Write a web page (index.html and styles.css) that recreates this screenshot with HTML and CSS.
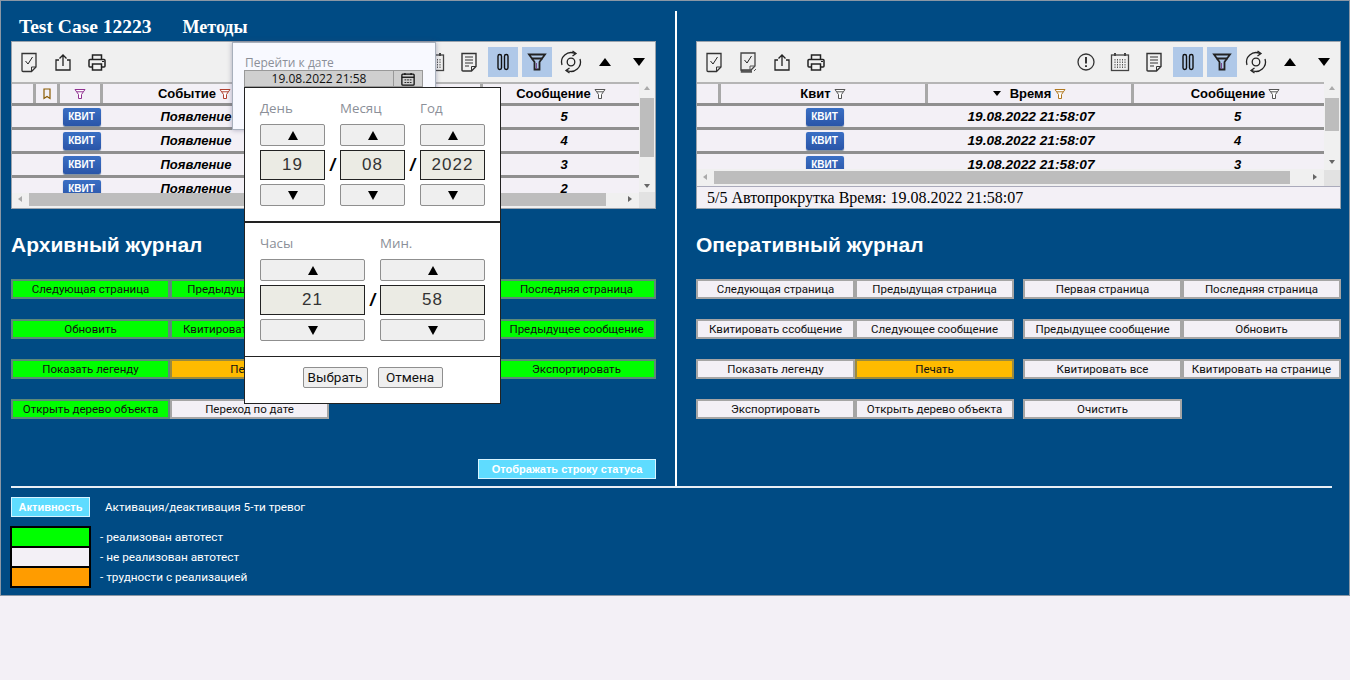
FILE: index.html
```html
<!DOCTYPE html>
<html lang="ru">
<head>
<meta charset="utf-8">
<title>Test Case 12223</title>
<link rel="stylesheet" href="styles.css">
</head>
<body>
<svg class="defs" width="0" height="0">
  <symbol id="i-doc" viewBox="0 0 20 22"><path d="M3 2.500h14v13.500l-4.500 4.500H4q-1 0-1-1z" fill="none" stroke="#333" stroke-width="1.300"/><path d="M12.500 20.500V16H17" fill="none" stroke="#333"/><path d="M6.500 10l2.500 3 4.500-7" fill="none" stroke="#222" stroke-width="1"/></symbol>
  <symbol id="i-docs" viewBox="0 0 20 22"><path d="M4 4.500v16h10" fill="none" stroke="#555" stroke-width="2.500"/><path d="M3 2h14v13l-4 4h-10z" fill="#eee" stroke="#444" stroke-width="1.300"/><path d="M6.500 9l2.500 3 4.500-7" fill="none" stroke="#222"/><path d="M12 19v-4h5M16 20l2-2" fill="none" stroke="#555"/></symbol>
  <symbol id="i-up" viewBox="0 0 20 22"><path d="M6 9H3v10h14V9h-3" fill="none" stroke="#222" stroke-width="1.300"/><path d="M10 15V4.500M6.500 7.500L10 4l3.500 3.500" fill="none" stroke="#222" stroke-width="1.300"/></symbol>
  <symbol id="i-print" viewBox="0 0 20 22"><path d="M5.500 8.500V4h9v4.500M5.500 16H3q-1 0-1-1V9.500q0-1 1-1h14q1 0 1 1V15q0 1-1 1h-2.500" fill="none" stroke="#222" stroke-width="1.500"/><rect x="5.500" y="13" width="9" height="6" fill="none" stroke="#222" stroke-width="1.500"/><path d="M15 10.500h2" stroke="#222"/></symbol>
  <symbol id="i-note" viewBox="0 0 20 22"><path d="M3 2.500h14v13l-4.500 4.500H4q-1 0-1-1z" fill="none" stroke="#333" stroke-width="1.400"/><path d="M6 6h8M6 9h8M6 12h8M6 15h4" stroke="#333"/><path d="M12.500 20v-4.500H17" fill="none" stroke="#333"/></symbol>
  <symbol id="i-cal" viewBox="0 0 20 20"><rect x="1.500" y="3" width="17" height="15.500" fill="none" stroke="#444" stroke-width="1.300"/><path d="M5 1v3M15 1v3" stroke="#444" stroke-width="2"/><path d="M5 7v9M7.500 7v9M10 7v9M12.500 7v9M15 7v9" stroke="#555" stroke-dasharray="1.500 1"/></symbol>
  <symbol id="i-cal2" viewBox="0 0 16 16"><rect x="1" y="2.500" width="14" height="12.500" rx="1" fill="none" stroke="#111" stroke-width="1.500"/><path d="M1 6h14" stroke="#111" stroke-width="1.500"/><path d="M4.500 1v2.500M11.500 1v2.500" stroke="#111" stroke-width="1.500"/><path d="M4 9h2M7 9h2M10 9h2M4 12h2M7 12h2M10 12h2" stroke="#111"/></symbol>
  <symbol id="i-pause" viewBox="0 0 20 20"><rect x="5" y="2.500" width="3.500" height="15" rx="1.700" fill="none" stroke="#111" stroke-width="1.400"/><rect x="11.500" y="2.500" width="3.500" height="15" rx="1.700" fill="none" stroke="#111" stroke-width="1.400"/></symbol>
  <symbol id="i-funnel" viewBox="0 0 20 20"><path d="M2 2.500h16l-5.500 7.500v7.500h-5V10z" fill="none" stroke="#222" stroke-width="1.800"/><path d="M4.500 6.500h11" stroke="#222" stroke-width="2"/><path d="M9.500 11v6" stroke="#7a4a90" stroke-width="1"/></symbol>
  <symbol id="i-sync" viewBox="0 0 24 24"><circle cx="12" cy="12" r="3.800" fill="none" stroke="#222" stroke-width="1.300"/><path d="M3 15A9.500 9.500 0 0 1 16 3.500M21 9a9.500 9.500 0 0 1-13 11.500" fill="none" stroke="#222" stroke-width="1.300"/><path d="M13.500 1l3.500 2.500-3.500 2.500M10.500 23L7 20.500 10.500 18" fill="none" stroke="#222" stroke-width="1.300"/></symbol>
  <symbol id="i-alert" viewBox="0 0 20 20"><circle cx="10" cy="10" r="8" fill="none" stroke="#333" stroke-width="1.300"/><path d="M10 5v6.500" stroke="#222" stroke-width="1.800"/><path d="M10 13.300v1.800" stroke="#222" stroke-width="1.800"/></symbol>
  <symbol id="i-f" viewBox="0 0 12 12"><path d="M1 1.500h10L7.500 6.500v4h-3v-4z" fill="#fff" stroke="currentColor" stroke-width="1"/><path d="M3 3.800h6" stroke="currentColor"/></symbol>
  <symbol id="i-mark" viewBox="0 0 10 12"><path d="M2 1h6v9.500L5 8.500l-3 2z" fill="none" stroke="#8a5a00" stroke-width="1.200"/></symbol>
</svg>

<main class="page">
  <div class="columns">
    <section class="col col-left">
      <header class="title"><span>Test Case 12223</span><span class="title-sub">Методы</span></header>
      <div class="panel panel-left">
        <div class="toolbar">
          <div class="tools">
            <span class="tool"><svg class="ic"><use href="#i-doc"/></svg></span>
            <span class="tool"><svg class="ic"><use href="#i-up"/></svg></span>
            <span class="tool"><svg class="ic"><use href="#i-print"/></svg></span>
          </div>
          <div class="tools">
            <span class="tool"><svg class="ic ic-cal"><use href="#i-cal"/></svg></span>
            <span class="tool"><svg class="ic"><use href="#i-note"/></svg></span>
            <span class="tool active"><svg class="ic ic-cal"><use href="#i-pause"/></svg></span>
            <span class="tool active"><svg class="ic ic-cal"><use href="#i-funnel"/></svg></span>
            <span class="tool"><svg class="ic ic-sync"><use href="#i-sync"/></svg></span>
            <span class="tool"><i class="tri up"></i></span>
            <span class="tool"><i class="tri down"></i></span>
          </div>
        </div>
        <div class="grid-wrap">
          <div class="viewport">
            <div class="row head cols-left">
              <div></div><div><svg class="mark"><use href="#i-mark"/></svg></div>
              <div><svg class="f f-pink"><use href="#i-f"/></svg></div>
              <div>Событие <svg class="f f-red"><use href="#i-f"/></svg></div>
              <div>Время</div>
              <div>Сообщение <svg class="f"><use href="#i-f"/></svg></div>
            </div>
            <div class="row cols-left"><div></div><div></div><div><span class="kvit">КВИТ</span></div><div>Появление</div><div class="time">19.08.2022 21:58:07</div><div class="msg">5</div></div>
            <div class="row cols-left"><div></div><div></div><div><span class="kvit">КВИТ</span></div><div>Появление</div><div class="time">19.08.2022 21:58:07</div><div class="msg">4</div></div>
            <div class="row cols-left"><div></div><div></div><div><span class="kvit">КВИТ</span></div><div>Появление</div><div class="time">19.08.2022 21:58:07</div><div class="msg">3</div></div>
            <div class="row cols-left"><div></div><div></div><div><span class="kvit">КВИТ</span></div><div>Появление</div><div class="time">19.08.2022 21:58:07</div><div class="msg">2</div></div>
          </div>
          <div class="vscroll vs-left"><i class="arr a-up"></i><b class="thumb"></b><i class="arr a-down"></i></div>
          <div class="hscroll"><i class="arr a-left"></i><b class="thumb"></b><i class="arr a-right"></i></div>
          <div class="corner"></div>
        </div>

        <div class="date-panel">
          <div class="date-label">Перейти к дате</div>
          <div class="date-field"><span>19.08.2022 21:58</span><span class="date-btn"><svg class="cal-small"><use href="#i-cal2"/></svg></span></div>
        </div>
      </div>

      <h2 class="journal">Архивный журнал</h2>
      <div class="btns">
        <span class="btn g">Следующая страница</span><span class="btn g">Предыдущая страница</span><span class="gap"></span><span class="btn g">Первая страница</span><span class="btn g">Последняя страница</span>
        <span class="btn g">Обновить</span><span class="btn g">Квитировать ссобщение</span><span class="gap"></span><span class="btn g">Следующее сообщение</span><span class="btn g">Предыдущее сообщение</span>
        <span class="btn g">Показать легенду</span><span class="btn o">Печать</span><span class="gap"></span><span class="btn g">Квитировать все</span><span class="btn g">Экспортировать</span>
        <span class="btn g">Открыть дерево объекта</span><span class="btn">Переход по дате</span>
      </div>
      <div class="status-row"><span class="status-btn">Отображать строку статуса</span></div>

      <div class="picker">
        <div class="pick-sec pick-date">
          <div class="pick-col"><label>День</label><span class="step"><i class="tri up"></i></span><span class="val">19</span><span class="step"><i class="tri down"></i></span></div>
          <span class="slash">/</span>
          <div class="pick-col"><label>Месяц</label><span class="step"><i class="tri up"></i></span><span class="val">08</span><span class="step"><i class="tri down"></i></span></div>
          <span class="slash">/</span>
          <div class="pick-col"><label>Год</label><span class="step"><i class="tri up"></i></span><span class="val">2022</span><span class="step"><i class="tri down"></i></span></div>
        </div>
        <div class="pick-sec pick-time">
          <div class="pick-col"><label>Часы</label><span class="step"><i class="tri up"></i></span><span class="val">21</span><span class="step"><i class="tri down"></i></span></div>
          <span class="slash">/</span>
          <div class="pick-col"><label>Мин.</label><span class="step"><i class="tri up"></i></span><span class="val">58</span><span class="step"><i class="tri down"></i></span></div>
        </div>
        <div class="pick-foot"><span class="act">Выбрать</span><span class="act">Отмена</span></div>
      </div>
    </section>

    <div class="vline"></div>

    <section class="col col-right">
      <div class="panel panel-right">
        <div class="toolbar">
          <div class="tools">
            <span class="tool"><svg class="ic"><use href="#i-doc"/></svg></span>
            <span class="tool"><svg class="ic"><use href="#i-docs"/></svg></span>
            <span class="tool"><svg class="ic"><use href="#i-up"/></svg></span>
            <span class="tool"><svg class="ic"><use href="#i-print"/></svg></span>
          </div>
          <div class="tools">
            <span class="tool"><svg class="ic ic-cal"><use href="#i-alert"/></svg></span>
            <span class="tool"><svg class="ic ic-cal"><use href="#i-cal"/></svg></span>
            <span class="tool"><svg class="ic"><use href="#i-note"/></svg></span>
            <span class="tool active"><svg class="ic ic-cal"><use href="#i-pause"/></svg></span>
            <span class="tool active"><svg class="ic ic-cal"><use href="#i-funnel"/></svg></span>
            <span class="tool"><svg class="ic ic-sync"><use href="#i-sync"/></svg></span>
            <span class="tool"><i class="tri up"></i></span>
            <span class="tool"><i class="tri down"></i></span>
          </div>
        </div>
        <div class="grid-wrap">
          <div class="viewport">
            <div class="row head cols-right">
              <div></div>
              <div>Квит <svg class="f"><use href="#i-f"/></svg></div>
              <div><i class="sort"></i>Время <svg class="f f-orange"><use href="#i-f"/></svg></div>
              <div>Сообщение <svg class="f"><use href="#i-f"/></svg></div>
            </div>
            <div class="row cols-right"><div></div><div><span class="kvit">КВИТ</span></div><div class="time">19.08.2022 21:58:07</div><div class="msg">5</div></div>
            <div class="row cols-right"><div></div><div><span class="kvit">КВИТ</span></div><div class="time">19.08.2022 21:58:07</div><div class="msg">4</div></div>
            <div class="row cols-right"><div></div><div><span class="kvit">КВИТ</span></div><div class="time">19.08.2022 21:58:07</div><div class="msg">3</div></div>
          </div>
          <div class="vscroll vs-right"><i class="arr a-up"></i><b class="thumb"></b><i class="arr a-down"></i></div>
          <div class="hscroll"><i class="arr a-left"></i><b class="thumb"></b><i class="arr a-right"></i></div>
          <div class="corner"></div>
        </div>
        <div class="statusbar">5/5 Автопрокрутка Время: 19.08.2022 21:58:07</div>
      </div>

      <h2 class="journal">Оперативный журнал</h2>
      <div class="btns">
        <span class="btn">Следующая страница</span><span class="btn">Предыдущая страница</span><span class="gap"></span><span class="btn">Первая страница</span><span class="btn">Последняя страница</span>
        <span class="btn">Квитировать ссобщение</span><span class="btn">Следующее сообщение</span><span class="gap"></span><span class="btn">Предыдущее сообщение</span><span class="btn">Обновить</span>
        <span class="btn">Показать легенду</span><span class="btn o">Печать</span><span class="gap"></span><span class="btn">Квитировать все</span><span class="btn">Квитировать на странице</span>
        <span class="btn">Экспортировать</span><span class="btn">Открыть дерево объекта</span><span class="gap"></span><span class="btn">Очистить</span>
      </div>
    </section>
  </div>

  <footer class="foot">
    <div class="activity"><span class="status-btn act-btn">Активность</span><span>Активация/деактивация 5-ти тревог</span></div>
    <div class="legend">
      <div class="swatches"><i class="sw sw-g"></i><i class="sw sw-w"></i><i class="sw sw-o"></i></div>
      <div class="legend-text"><span>- реализован автотест</span><span>- не реализован автотест</span><span>- трудности с реализацией</span></div>
    </div>
  </footer>
</main>
</body>
</html>
```

FILE: styles.css
```css
* { box-sizing: border-box; }
html, body { margin: 0; padding: 0; }
body { background: #f3f0f6; font-family: "Liberation Sans", Arial, sans-serif; width: 1350px; height: 680px; overflow: hidden; }
.defs { position: absolute; }
.page { width: 1350px; height: 596px; background: #004b84; border: 1px solid #8a97a5; padding: 10px 8px 0 10px; display: flex; flex-direction: column; color: #fff; }
.columns { display: flex; height: 477px; border-bottom: 2px solid #e8eef5; width: 1321px; }
.col { position: relative; width: 645px; flex: none; }
.col-left { margin-right: 19px; }
.col-right { margin-left: 19px; width: 645px; padding-top: 30px; }
.vline { width: 2px; background: #fff; flex: none; height: 475px; }
.title { height: 30px; padding: 5px 0 0 8px; display: flex; gap: 31px; font: bold 19.500px/22px "Liberation Serif", serif; }
.title-sub { font-size: 18px; }
.panel { position: relative; width: 645px; height: 168px; background: #f0f0f0; border: 1px solid #9aa3ad; color: #000; }
.toolbar { height: 40px; display: flex; justify-content: space-between; align-items: center; padding: 0 1px 0 2px; background: #f0f0f0; }
.tools { display: flex; align-items: center; gap: 4px; }
.tool { width: 30px; height: 30px; display: flex; align-items: center; justify-content: center; }
.tool.active { background: #afc8e8; }
.ic { width: 20px; height: 22px; }
.ic-cal { width: 20px; height: 20px; }
.ic-sync { width: 24px; height: 24px; }
.tri { display: block; width: 0; height: 0; border-left: 6px solid transparent; border-right: 6px solid transparent; }
.tri.up { border-bottom: 8px solid #000; }
.tri.down { border-top: 8px solid #000; }
.grid-wrap { position: relative; height: 126px; }
.panel-right .grid-wrap { height: 104px; }
.viewport { position: absolute; left: 0; top: 0; right: 16px; height: 111px; overflow: hidden; background: #f3f0f6; }
.panel-right .viewport { height: 87px; }
.row { display: grid; height: 24px; align-items: stretch; border-bottom: 3px solid #8f8f8f; background: #f3f0f6; font: italic bold 13px "Liberation Sans", sans-serif; }
.row > div { display: flex; align-items: center; justify-content: center; white-space: nowrap; }
.row > .time { font-size: 13.700px; }
.cols-left > .msg { padding-left: 6px; }
.cols-right > .msg { padding-left: 16px; }
.head { font: bold 13px "Liberation Sans", sans-serif; background: #f3f0f6; }
.head { border-top: 2px solid #b5b5b5; }
.head > div { border-right: 3px solid #a8a8a8; gap: 3px; }
.head > div:last-child { border-right: 0; }
.head.cols-right > div:last-child { padding-left: 12px; }
.cols-left { grid-template-columns: 24px 24px 43px 186px 194px 156px; }
.cols-right { grid-template-columns: 24px 207px 206px 191px; }
.f { width: 12px; height: 12px; color: #555; }
.f-red { color: #b04030; }
.f-pink { color: #903090; }
.f-orange { color: #b07820; }
.mark { width: 10px; height: 12px; }
.sort { display: block; width: 0; height: 0; border-left: 4px solid transparent; border-right: 4px solid transparent; border-top: 5px solid #000; margin-right: 6px; }
.kvit { display: block; width: 38px; height: 18px; border-radius: 2px; background: linear-gradient(#3a6fc4, #2a55a8); box-shadow: 0 1px 1px #789; color: #fff; font: bold 10px/17px "Liberation Sans", sans-serif; text-align: center; }
.vscroll { position: absolute; top: 0; right: 0; width: 16px; height: 111px; background: #f0f0f0; }
.vs-right { height: 87px; }
.vscroll .thumb { position: absolute; left: 1px; width: 14px; top: 16px; background: #bdbdbd; }
.vs-left .thumb { height: 59px; }
.vs-right .thumb { height: 33px; }
.hscroll { position: absolute; left: 0; right: 16px; bottom: 1px; height: 14px; background: #f0f0f0; }
.hscroll .thumb { position: absolute; left: 17px; top: 0; height: 13px; background: #bdbdbd; }
.panel-left .hscroll .thumb { width: 577px; }
.panel-right .hscroll .thumb { width: 576px; }
.corner { position: absolute; right: 0; bottom: 0; width: 16px; height: 16px; background: #e2e2e2; }
.arr { position: absolute; width: 0; height: 0; border: 3px solid transparent; }
.a-up { top: 4px; left: 5px; border-bottom: 4px solid #aaa; border-top: 0; }
.a-down { bottom: 5px; left: 5px; border-top: 4px solid #666; border-bottom: 0; }
.a-left { left: 6px; top: 3px; border-right: 4px solid #aaa; border-left: 0; }
.a-right { right: 7px; top: 3px; border-left: 4px solid #666; border-right: 0; }
.statusbar { height: 22px; border-top: 1px solid #aab; background: #f3f0f6; padding: 2px 0 0 10px; font: 16px/18px "Liberation Serif", serif; white-space: nowrap; overflow: hidden; }
.journal { margin: 24px 0 0 0; height: 46px; font: bold 21px/24px "Liberation Sans", sans-serif; }
.btns { display: grid; grid-template-columns: 159px 159px 9px 159px 159px; grid-auto-rows: 20px; row-gap: 20px; }
.btn { display: block; height: 20px; border: 2px solid #a5a5a5; background: #f3f0f6; color: #111; font: 11.500px/17px Roboto, "Liberation Sans", sans-serif; text-align: center; white-space: nowrap; }
.btn.g { background: #00ff00; border-color: #5d8a78; }
.btn.o { background: #ffbb00; border-color: #9a8a40; }
.status-row { position: absolute; right: 0; top: 448px; }
.status-btn { display: block; width: 178px; height: 20px; background: #5fdcff; border: 1px solid #d8f4ff; color: #fff; font: bold 11px/18px "Liberation Sans", sans-serif; text-align: center; white-space: nowrap; }
.date-panel { position: absolute; left: 220px; top: 0; width: 204px; height: 88px; background: #f8f9ff; border: 1px solid #a8b0bc; box-shadow: 0 0 5px rgba(60,60,100,.4); padding: 12px 0 0 11px; z-index: 2; }
.date-label { margin-left: 1px; font: 12px/16px "Open Sans", "Liberation Sans", sans-serif; color: #8b8f98; }
.date-field { width: 179px; height: 17px; margin-top: -1px; display: flex; background: #cfcfcf; border: 1px solid #999; font: 12px/15px "Open Sans", "Liberation Sans", sans-serif; color: #111; }
.date-field > span:first-child { flex: 1; text-align: center; }
.date-btn { width: 29px; border-left: 1px solid #999; display: flex; justify-content: center; padding-top: 1px; }
.cal-small { width: 14px; height: 14px; }
.picker { position: absolute; left: 233px; top: 76px; width: 257px; height: 317px; background: #fff; border: 1px solid #222; z-index: 3; color: #000; }
.pick-sec { display: flex; padding: 12px 15px 0; }
.pick-date { height: 135px; border-bottom: 2px solid #222; }
.pick-time { height: 134px; border-bottom: 1px solid #222; }
.pick-date .pick-col { width: 65px; }
.pick-time .pick-col { width: 105px; }
.pick-col { display: flex; flex-direction: column; }
.pick-col label { height: 24px; font: 13.300px/16px "Open Sans", "Liberation Sans", sans-serif; color: #8b8f98; }
.step { height: 22px; display: flex; align-items: center; justify-content: center; background: #efefef; border: 1px solid #8f8f8f; border-radius: 2px; }
.step .tri { border-left-width: 5px; border-right-width: 5px; }
.step .tri.up { border-bottom-width: 9px; }
.step .tri.down { border-top-width: 9px; }
.val { height: 30px; margin: 4px 0; background: #ebebe4; border: 1px solid #222; text-align: center; font: 17px/28px "Liberation Sans", sans-serif; letter-spacing: 1px; color: #333; }
.slash { width: 15px; text-align: center; font: italic bold 18px/24px "Liberation Sans", sans-serif; margin-top: 53px; height: 24px; color: #000; }
.pick-foot { display: flex; justify-content: center; gap: 10px; padding-top: 10px; }
.act { display: block; width: 65px; text-align: center; height: 21px; background: #efefef; border: 1px solid #8f8f8f; border-radius: 2px; font: 13.500px/19px Roboto, "Liberation Sans", sans-serif; color: #111; }
.foot { padding-top: 9px; }
.activity { display: flex; align-items: center; gap: 15px; font: 11.700px/20px Roboto, "Liberation Sans", sans-serif; }
.act-btn { width: 79px; }
.legend { display: flex; margin: 9px 0 0 -1px; gap: 9px; }
.swatches { width: 81px; background: #000; padding: 2px; display: flex; flex-direction: column; gap: 2px; height: 62px; }
.sw { display: block; height: 18px; }
.sw-g { background: #00ff00; }
.sw-w { background: #f3f0f6; }
.sw-o { background: #ff9c00; }
.legend-text { display: flex; flex-direction: column; padding-top: 1px; font: 11.800px/20px Roboto, "Liberation Sans", sans-serif; }
```
